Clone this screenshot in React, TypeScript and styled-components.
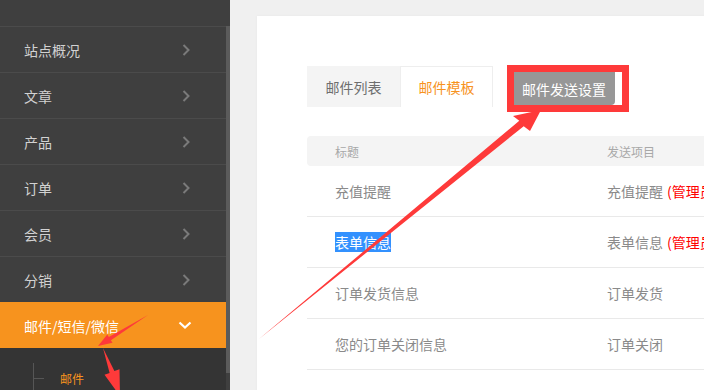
import React from 'react';
import styled, { createGlobalStyle } from 'styled-components';

const GlobalStyle = createGlobalStyle`
  html, body {
    margin: 0;
    padding: 0;
    width: 704px;
    height: 390px;
    overflow: hidden;
    background: #f0f0f0;
  }
  body {
    font-family: "Noto Sans CJK SC", "Noto Sans", sans-serif;
  }
`;

const Page = styled.div`
  display: flex;
  width: 704px;
  height: 390px;
  position: relative;
  overflow: hidden;
`;

const Sidebar = styled.aside`
  width: 230px;
  flex-shrink: 0;
  display: flex;
  background: #3f3f3f;
`;

const Menu = styled.nav`
  flex: 1;
  display: flex;
  flex-direction: column;
  overflow: hidden;
`;

const MenuTop = styled.div`
  height: 26px;
  flex-shrink: 0;
`;

const MenuItem = styled.div<{ $active?: boolean }>`
  flex-shrink: 0;
  height: 45px;
  border-top: 1px solid ${(p) => (p.$active ? '#f7931e' : '#4b4b4b')};
  background: ${(p) => (p.$active ? '#f7931e' : 'transparent')};
  color: ${(p) => (p.$active ? '#ffffff' : '#d2d2d2')};
  font-size: 14px;
  display: flex;
  align-items: center;
  justify-content: space-between;
  padding: 0 ${(p) => (p.$active ? '34px' : '36px')} 0 24px;
`;

const SubMenu = styled.div`
  flex: 1 0 auto;
  background: #343434;
  padding: 15px 0 0 33px;
`;

const SubItem = styled.div`
  display: flex;
  align-items: center;
  border-left: 1px solid #565656;
  height: 40px;
  padding-bottom: 10px;
  box-sizing: border-box;
`;

const Tick = styled.span`
  width: 10px;
  height: 1px;
  background: #565656;
  margin-right: 16px;
`;

const SubLabel = styled.span`
  color: #f7931e;
  font-size: 12px;
`;

const ScrollTrack = styled.div`
  width: 4px;
  padding-top: 26px;
`;

const ScrollThumb = styled.div`
  height: 347px;
  background: #5b5b5b;
`;

const Main = styled.main`
  flex: 1;
  padding: 16px 0 0 27px;
`;

const Card = styled.section`
  width: 520px;
  height: 400px;
  background: #ffffff;
  box-shadow: 0 0 3px rgba(0, 0, 0, 0.04);
  padding: 50px 0 0 50px;
`;

const TabBar = styled.div`
  display: flex;
  align-items: flex-start;
  height: 41px;
`;

const Tab = styled.div<{ $active?: boolean }>`
  width: 93px;
  height: 41px;
  box-sizing: border-box;
  display: flex;
  align-items: center;
  justify-content: center;
  font-size: 14px;
  color: ${(p) => (p.$active ? '#f7931e' : '#6e6e6e')};
  background: ${(p) => (p.$active ? '#ffffff' : '#f4f4f4')};
  border: 1px solid ${(p) => (p.$active ? '#eeeeee' : '#f4f4f4')};
  border-bottom: none;
`;

const Highlight = styled.div`
  margin: -1px 0 0 14px;
  border: 7px solid #fe3a3a;
  padding-right: 7px;
  display: flex;
`;

const SettingButton = styled.button`
  height: 33px;
  border: none;
  background: #979797;
  color: #ffffff;
  font-family: inherit;
  font-size: 14px;
  padding: 0 9px 0 8px;
  border-radius: 0 0 4px 0;
`;

const Table = styled.div`
  margin-top: 29px;
`;

const HeaderRow = styled.div`
  display: grid;
  grid-template-columns: 300px 1fr;
  height: 30px;
  align-items: center;
  background: #f4f4f4;
  border-radius: 4px;
  font-size: 12px;
  color: #a8a8a8;
`;

const Row = styled.div`
  display: grid;
  grid-template-columns: 300px 1fr;
  height: 50px;
  align-items: center;
  border-bottom: 1px solid #e9e9e9;
  font-size: 14px;
  color: #8a8a8a;
  white-space: nowrap;
`;

const Cell = styled.div<{ $first?: boolean }>`
  padding-left: ${(p) => (p.$first ? '28px' : '0')};
`;

const Note = styled.span`
  color: #ff0000;
  margin-left: 4px;
`;

const Selected = styled.span`
  background: #3391fe;
  color: #ffffff;
`;

const Annotations = styled.svg`
  position: absolute;
  left: 0;
  top: 0;
  pointer-events: none;
`;

const Chevron: React.FC<{ down?: boolean }> = ({ down }) =>
  down ? (
    <svg width="14" height="9" viewBox="0 0 14 9">
      <path d="M1.5 1.5 L7 6.5 L12.5 1.5" fill="none" stroke="#ffffff" strokeWidth="2.2" />
    </svg>
  ) : (
    <svg width="8" height="12" viewBox="0 0 8 12">
      <path d="M1.5 1 L6.5 6 L1.5 11" fill="none" stroke="#7a7a7a" strokeWidth="2" />
    </svg>
  );

const menu = ['站点概况', '文章', '产品', '订单', '会员', '分销'];

const rows = [
  { title: '充值提醒', item: '充值提醒', note: '(管理员)' },
  { title: '表单信息', item: '表单信息', note: '(管理员)', selected: true },
  { title: '订单发货信息', item: '订单发货' },
  { title: '您的订单关闭信息', item: '订单关闭' },
];

const App: React.FC = () => {
  return (
    <Page>
      <GlobalStyle />
      <Sidebar>
        <Menu>
          <MenuTop />
          {menu.map((m) => (
            <MenuItem key={m}>
              <span>{m}</span>
              <Chevron />
            </MenuItem>
          ))}
          <MenuItem $active>
            <span>邮件/短信/微信</span>
            <Chevron down />
          </MenuItem>
          <SubMenu>
            <SubItem>
              <Tick />
              <SubLabel>邮件</SubLabel>
            </SubItem>
          </SubMenu>
        </Menu>
        <ScrollTrack>
          <ScrollThumb />
        </ScrollTrack>
      </Sidebar>
      <Main>
        <Card>
          <TabBar>
            <Tab>邮件列表</Tab>
            <Tab $active>邮件模板</Tab>
            <Highlight>
              <SettingButton>邮件发送设置</SettingButton>
            </Highlight>
          </TabBar>
          <Table>
            <HeaderRow>
              <Cell $first>标题</Cell>
              <Cell>发送项目</Cell>
            </HeaderRow>
            {rows.map((r) => (
              <Row key={r.title}>
                <Cell $first>{r.selected ? <Selected>{r.title}</Selected> : r.title}</Cell>
                <Cell>
                  {r.item}
                  {r.note && <Note>{r.note}</Note>}
                </Cell>
              </Row>
            ))}
          </Table>
        </Card>
      </Main>
      <Annotations width="704" height="390" viewBox="0 0 704 390">
        <polygon
          points="259,339 523.7,126.2 530,131 541,110 513,116 519.3,120.8"
          fill="#fe3a3a"
        />
        <polygon
          points="148,315 110.9,340.3 112.5,342.8 98,346 107.3,334.4 108.8,336.9"
          fill="#fe3a3a"
        />
        <polygon
          points="103,348 114.4,371.1 119.5,369.3 120,396 104.5,374.7 109.6,372.9"
          fill="#fe3a3a"
        />
      </Annotations>
    </Page>
  );
};

export default App;
